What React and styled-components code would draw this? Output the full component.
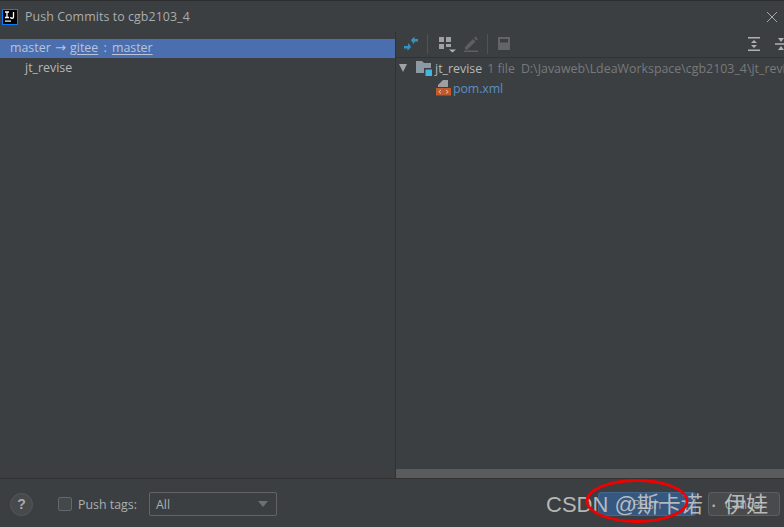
import React from 'react';
import styled, { createGlobalStyle } from 'styled-components';

const GlobalStyle = createGlobalStyle`
  html, body {
    margin: 0;
    padding: 0;
    background: #3c3f41;
  }
`;

const Dialog = styled.div`
  position: relative;
  width: 784px;
  height: 527px;
  display: flex;
  flex-direction: column;
  overflow: hidden;
  background: #3c3f41;
  color: #bbbbbb;
  font-family: 'Open Sans', sans-serif;
  font-size: 12.4px;
  border-top: 1px solid #2b2d2e;
  box-sizing: border-box;
`;

const TitleBar = styled.div`
  height: 31px;
  flex: none;
  display: flex;
  align-items: center;
  padding: 0 6px 0 2px;
  gap: 7px;
  color: #a9adae;
`;

const TitleText = styled.span`
  flex: 1;
  letter-spacing: 0.08px;
`;

const Body = styled.div`
  flex: 1;
  min-height: 0;
  display: flex;
`;

const LeftPanel = styled.div`
  width: 395px;
  flex: none;
  padding-top: 7px;
  border-right: 1px solid #323232;
`;

const BranchRow = styled.div`
  height: 19px;
  line-height: 18px;
  padding-left: 10px;
  background: #4b6eaf;
  color: #b9c4d8;
`;

const Arrow = styled.span`
  font-family: 'DejaVu Sans', sans-serif;
  font-size: 13px;
  margin: 0 1px;
`;

const Colon = styled.span`
  margin: 0 2px;
`;

const Link = styled.span`
  text-decoration: underline;
  text-underline-offset: 2px;
`;

const CommitRow = styled.div`
  height: 19px;
  line-height: 19px;
  padding-left: 25px;
  color: #b4b8b9;
`;

const RightPanel = styled.div`
  flex: 1;
  min-width: 0;
  display: flex;
  flex-direction: column;
`;

const Toolbar = styled.div`
  height: 23px;
  flex: none;
  display: flex;
  align-items: center;
  padding: 0 0 2px 7px;
  border-bottom: 1px solid #323232;
`;

const ToolButton = styled.span`
  width: 16px;
  height: 16px;
  display: flex;
  margin-left: ${p => p.$left || 0}px;
  flex: none;
`;

const ToolSeparator = styled.span`
  width: 1px;
  height: 20px;
  flex: none;
  background: #515354;
  margin: 0 8px;
`;

const Tree = styled.div`
  flex: 1;
  min-height: 0;
  white-space: nowrap;
  overflow: hidden;
`;

const TreeRow = styled.div`
  height: 20px;
  display: flex;
  align-items: center;
  padding-left: ${p => p.$indent}px;
`;

const Chevron = styled.span`
  width: 0;
  height: 0;
  flex: none;
  border-left: 4.5px solid transparent;
  border-right: 4.5px solid transparent;
  border-top: 8px solid #a0a3a4;
  margin-right: 9px;
`;

const ModuleName = styled.span`
  color: #b4b8b9;
  margin: 0 5px 0 3px;
`;

const Muted = styled.span`
  color: #777a7c;
  margin-right: 6px;
`;

const FileName = styled.span`
  color: #5a8fc0;
  margin-left: 2px;
  letter-spacing: -0.1px;
`;

const ScrollTrack = styled.div`
  height: 9px;
  flex: none;
  background: #595b5d;
`;

const Footer = styled.div`
  height: 49px;
  flex: none;
  box-sizing: border-box;
  display: flex;
  align-items: center;
  padding: 2px 4px 0 10px;
  border-top: 1px solid #323232;
`;

const HelpButton = styled.span`
  width: 23px;
  height: 23px;
  flex: none;
  border-radius: 50%;
  background: #47494b;
  border: 1px solid #55585a;
  box-sizing: border-box;
  display: flex;
  align-items: center;
  justify-content: center;
  font-family: 'Liberation Sans', sans-serif;
  font-weight: 700;
  font-size: 14px;
  color: #a9abac;
  margin-right: 25px;
`;

const Checkbox = styled.span`
  width: 14px;
  height: 14px;
  flex: none;
  box-sizing: border-box;
  border: 1px solid #646769;
  border-radius: 2px;
  background: #43494a;
  margin-right: 6px;
`;

const TagsLabel = styled.span`
  color: #a9b0b3;
  width: 59px;
  flex: none;
  white-space: nowrap;
`;

const Select = styled.div`
  width: 128px;
  height: 24px;
  box-sizing: border-box;
  margin-left: 12px;
  padding: 0 7px 0 6px;
  display: flex;
  align-items: center;
  justify-content: space-between;
  border: 1px solid #646464;
  border-radius: 2px;
  background: #3c3f41;
  color: #a9b0b3;
`;

const Caret = styled.span`
  width: 0;
  height: 0;
  border-left: 5px solid transparent;
  border-right: 5px solid transparent;
  border-top: 6px solid #6e7173;
  margin-right: 1px;
`;

const Actions = styled.div`
  margin-left: auto;
  display: flex;
  gap: 12px;
`;

const Button = styled.span`
  height: 24px;
  box-sizing: border-box;
  width: ${p => p.$width}px;
  display: flex;
  align-items: center;
  justify-content: center;
  border-radius: 3px;
  color: #9ca3a8;
  background: ${p => (p.$primary ? '#365880' : '#484a4c')};
  border: 1px solid ${p => (p.$primary ? '#44678f' : '#5c5e60')};
`;

const Watermark = styled.div`
  position: absolute;
  left: 546px;
  top: 490px;
  font-family: 'Liberation Sans', 'Noto Sans CJK SC', sans-serif;
  font-size: 22px;
  line-height: 28px;
  white-space: nowrap;
  color: rgba(205, 205, 205, 0.85);
`;

const Dot = styled.span`
  margin: 0 1px;
`;

const Ellipse = styled.svg`
  position: absolute;
  left: 583px;
  top: 476px;
  width: 108px;
  height: 48px;
`;

const AppIcon = () => (
  <svg width="16" height="16" viewBox="0 0 16 16" style={{ flex: 'none' }}>
    <rect x="0.5" y="0.5" width="15" height="15" fill="#000" stroke="#087cfa" />
    <rect x="3" y="11.5" width="6" height="1.2" fill="#fff" />
    <path d="M3 3h4M5 3v5.5M3 8.5h4M11.5 3v4.5a1.5 1.5 0 0 1-3 .5" stroke="#fff" strokeWidth="1.3" fill="none" />
  </svg>
);

const CloseIcon = () => (
  <svg width="12" height="12" viewBox="0 0 12 12">
    <path d="M1 1l10 10M11 1L1 11" stroke="#a6a8a9" strokeWidth="1" fill="none" />
  </svg>
);

const CollapseArrows = () => (
  <svg width="16" height="16" viewBox="0 0 16 16">
    <path d="M8 4l3.5-3.5V3H15v2.5h-3.2L10.5 8z" fill="#3592c4" />
    <path d="M8 11L4.5 14.8V12.5H1V10h3.8L5.5 7z" fill="#3592c4" />
  </svg>
);

const GroupIcon = () => (
  <svg width="20" height="18" viewBox="0 0 20 18" style={{ flex: 'none' }}>
    <path d="M1 1h5v5H1zM8 1h5v5H8zM1 8h5v5H1zM8 8h5v3H8z" fill="#9fa1a3" />
    <path d="M11 13.5h7l-3.5 3z" fill="#afb1b3" />
  </svg>
);

const EditIcon = () => (
  <svg width="16" height="16" viewBox="0 0 16 16">
    <path d="M2 11l8-8 2.5 2.5-8 8H2zM11 2l1.5-1.5L15 3l-1.5 1.5z" fill="#5d5f61" />
    <path d="M1 14.5h14V16H1z" fill="#5d5f61" />
  </svg>
);

const SaveIcon = () => (
  <svg width="16" height="16" viewBox="0 0 16 16">
    <path d="M2 1h12v13H2z" fill="#626466" />
    <path d="M4 3h8v3.5H4z" fill="#3c3f41" />
  </svg>
);

const ExpandAll = () => (
  <svg width="14" height="16" viewBox="0 0 14 16">
    <path d="M1 1h12v1.5H1zM1 13.5h12V15H1zM7 4l3 3H4zM7 12L4 9h6z" fill="#afb1b3" />
  </svg>
);

const CollapseAll = () => (
  <svg width="14" height="16" viewBox="0 0 14 16">
    <path d="M1 7.2h14v1.5H1zM7 6L4 2h6zM7 10l3 4H4z" fill="#afb1b3" />
  </svg>
);

const FolderIcon = () => (
  <svg width="16" height="15" viewBox="0 0 16 15" style={{ flex: 'none' }}>
    <path d="M0 0h6l2 2h7v10H0z" fill="#8c9aa5" />
    <rect x="8" y="7" width="8" height="8" fill="#3c3f41" />
    <rect x="9.5" y="8.5" width="6.5" height="6.5" fill="#40b6e0" />
  </svg>
);

const XmlIcon = () => (
  <svg width="15" height="16" viewBox="0 0 15 16" style={{ flex: 'none' }}>
    <path d="M7 0h5v7H2V5z" fill="#9da0a2" />
    <rect x="0" y="8" width="15" height="7.5" fill="#c05a2a" />
    <path d="M5 10l-2.2 1.7L5 13.4M10 10l2.2 1.7L10 13.4" stroke="#e8c9b8" strokeWidth="0.9" fill="none" />
  </svg>
);

const App = () => (
  <Dialog>
    <GlobalStyle />
    <TitleBar>
      <AppIcon />
      <TitleText>Push Commits to cgb2103_4</TitleText>
      <CloseIcon />
    </TitleBar>
    <Body>
      <LeftPanel>
        <BranchRow>
          master <Arrow>→</Arrow> <Link>gitee</Link><Colon> : </Colon><Link>master</Link>
        </BranchRow>
        <CommitRow>jt_revise</CommitRow>
      </LeftPanel>
      <RightPanel>
        <Toolbar>
          <ToolButton><CollapseArrows /></ToolButton>
          <ToolSeparator />
          <ToolButton $left={2}><GroupIcon /></ToolButton>
          <ToolButton $left={9}><EditIcon /></ToolButton>
          <ToolSeparator />
          <ToolButton><SaveIcon /></ToolButton>
          <ToolButton $left={235}><ExpandAll /></ToolButton>
          <ToolButton $left={11}><CollapseAll /></ToolButton>
        </Toolbar>
        <Tree>
          <TreeRow $indent={3}>
            <Chevron />
            <FolderIcon />
            <ModuleName>jt_revise</ModuleName>
            <Muted>1 file</Muted>
            <Muted>D:\Javaweb\LdeaWorkspace\cgb2103_4\jt_revise</Muted>
          </TreeRow>
          <TreeRow $indent={40}>
            <XmlIcon />
            <FileName>pom.xml</FileName>
          </TreeRow>
        </Tree>
        <ScrollTrack />
      </RightPanel>
    </Body>
    <Footer>
      <HelpButton>?</HelpButton>
      <Checkbox />
      <TagsLabel>Push tags:</TagsLabel>
      <Select>
        All
        <Caret />
      </Select>
      <Actions>
        <Button $primary $width={98}>Push</Button>
        <Button $width={72}>Cancel</Button>
      </Actions>
    </Footer>
    <Watermark>CSDN @斯卡诺<Dot> · </Dot>伊娃</Watermark>
    <Ellipse viewBox="0 0 108 48">
      <ellipse cx="54" cy="24" rx="50" ry="20.5" fill="none" stroke="#f00000" strokeWidth="2.8" />
    </Ellipse>
  </Dialog>
);

export default App;
